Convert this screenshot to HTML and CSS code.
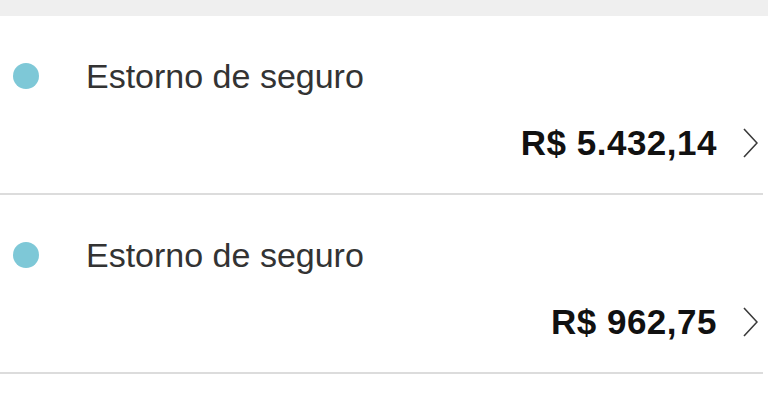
FILE: index.html
```html
<!DOCTYPE html>
<html lang="pt-BR">
<head>
<meta charset="utf-8">
<link rel="stylesheet" href="styles.css">
<title>Estornos</title>
</head>
<body>
<div class="topband"></div>
<ul class="list">
  <li class="item">
    <div class="title-line">
      <span class="dot"></span>
      <span class="title">Estorno de seguro</span>
    </div>
    <div class="amount-line">
      <span class="amount">R$ 5.432,14</span>
      <svg class="chevron" viewBox="0 0 15 30" width="15" height="30"><path d="M1 1 L14 15 L1 29" fill="none" stroke="#3a3a3a" stroke-width="1.6"/></svg>
    </div>
  </li>
  <li class="item">
    <div class="title-line">
      <span class="dot"></span>
      <span class="title">Estorno de seguro</span>
    </div>
    <div class="amount-line">
      <span class="amount">R$ 962,75</span>
      <svg class="chevron" viewBox="0 0 15 30" width="15" height="30"><path d="M1 1 L14 15 L1 29" fill="none" stroke="#3a3a3a" stroke-width="1.6"/></svg>
    </div>
  </li>
</ul>
</body>
</html>
```
FILE: styles.css
```css
html, body {
  margin: 0;
  padding: 0;
  background: #ffffff;
  font-family: "Liberation Sans", Arial, sans-serif;
  overflow: hidden;
}
.topband {
  height: 16px;
  background: #efefef;
}
.list {
  list-style: none;
  margin: 0;
  padding: 0;
}
.item {
  padding: 40px 0 30px 0;
  margin-right: 5px;
  border-bottom: 2px solid #dcdcdc;
}
.title-line {
  display: flex;
  align-items: center;
  gap: 47px;
  padding-left: 13px;
  height: 40px;
}
.dot {
  width: 26px;
  height: 26px;
  border-radius: 50%;
  background: #7ec8d7;
  flex: none;
}
.title {
  font-size: 34px;
  line-height: 40px;
  color: #333333;
}
.amount-line {
  margin-top: 27px;
  display: flex;
  justify-content: flex-end;
  align-items: center;
  gap: 26px;
  padding-right: 5px;
  height: 40px;
}
.amount {
  font-size: 35px;
  line-height: 40px;
  font-weight: bold;
  letter-spacing: 0.5px;
  color: #111111;
}
.chevron {
  display: block;
  flex: none;
}
```
